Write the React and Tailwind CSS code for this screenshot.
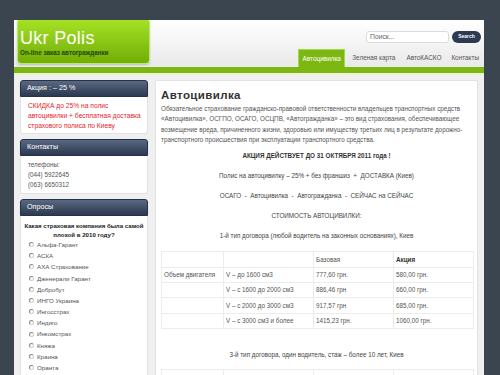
import React from "react";

const F = "font-['Liberation_Sans',Arial,sans-serif]";

function BoxHeader({ children }) {
  return (
    <div className="h-[17px] rounded-t-[3px] bg-gradient-to-b from-[#5a6982] to-[#2c394f] border border-[#26324a] flex items-center pl-[6px] text-white text-[7.2px] shadow-[0_1px_1px_rgba(0,0,0,0.3)]">
      {children}
    </div>
  );
}

const insurers = [
  "Альфа-Гарант",
  "АСКА",
  "АХА Страхование",
  "Дженерали Гарант",
  "Добробут",
  "ИНГО Украина",
  "Ингосстрах",
  "Индиго",
  "Инкомстрах",
  "Княжа",
  "Краина",
  "Оранта",
];

const rows = [
  ["Объем двигателя", "V – до 1600 см3", "777,60 грн.", "580,00 грн."],
  ["", "V – с 1600 до 2000 см3", "886,46 грн", "660,00 грн."],
  ["", "V – с 2000 до 3000 см3", "917,57 грн", "685,00 грн."],
  ["", "V – с 3000 см3 и более", "1415,23 грн.", "1060,00 грн."],
];

function PriceTable({ data, headOnly }) {
  return (
    <table className="ml-[5px] w-[312px] border-collapse text-[6.3px] text-[#555] table-fixed">
      <colgroup>
        <col className="w-[62px]" />
        <col className="w-[90px]" />
        <col className="w-[80px]" />
        <col className="w-[80px]" />
      </colgroup>
      <tbody>
        <tr className="h-[15.4px]">
          <td className="border border-[#ececec] px-[2px]"></td>
          <td className="border border-[#ececec] px-[2px]"></td>
          <td className="border border-[#ececec] px-[2px]">Базовая</td>
          <td className="border border-[#ececec] px-[2px] font-bold text-[#333]">Акция</td>
        </tr>
        {!headOnly &&
          data.map((r, i) => (
            <tr key={i} className="h-[15.4px]">
              {r.map((c, j) => (
                <td key={j} className="border border-[#ececec] px-[2px] whitespace-nowrap">
                  {c}
                </td>
              ))}
            </tr>
          ))}
      </tbody>
    </table>
  );
}

export default function App() {
  return (
    <div className={`min-h-screen h-[375px] overflow-hidden bg-[#3a4550] pt-[20px] ${F}`}>
      <div className="ml-[14px] w-[470px] bg-[#f0f0f0] h-[355px] overflow-hidden">
        {/* header */}
        <div className="h-[47px] flex bg-gradient-to-b from-white to-[#e9e9e9]">
          <div className="ml-[3px] -mt-[2px] w-[133px] h-[46px] rounded-[4px] bg-gradient-to-b from-[#a6e324] to-[#72ad06] border border-[#b9e86a] pl-[2px] shadow-[0_1px_2px_rgba(0,0,0,0.2)]">
            <div className="pt-[10px] text-[18px] leading-[18px] text-white tracking-[0.3px]">Ukr Polis</div>
            <div className="mt-[2px] text-[6.3px] font-bold text-[#24420a] leading-[8px] whitespace-nowrap">
              On-line заказ автогражданки
            </div>
          </div>
          <div className="ml-auto flex flex-col items-end pr-[3px]">
            <div className="mt-[11px] flex gap-[3px]">
              <div className="w-[83px] h-[12px] bg-white border border-[#dcdcdc] rounded-[3px] flex items-center pl-[3px] text-[6.8px] text-[#666]">
                Поиск...
              </div>
              <div className="w-[29px] h-[12px] rounded-full bg-[#2d3a52] text-white text-[5px] font-bold flex items-center justify-center">
                Search
              </div>
            </div>
            <div className="mt-auto flex items-end text-[6.4px] text-[#555] pr-[2px]">
              <div className="h-[18px] w-[47px] bg-[#7cb712] border-t border-x border-[#a3d84a] text-white flex items-center justify-center">
                Автоцивилка
              </div>
              <div className="h-[18px] flex items-center ml-[7px]">Зеленая карта</div>
              <div className="h-[18px] flex items-center ml-[11px]">АвтоКАСКО</div>
              <div className="h-[18px] flex items-center ml-[10px]">Контакты</div>
            </div>
          </div>
        </div>
        <div className="h-[6px] bg-[#7cb712]" />
        <div className="h-[2px] bg-[#eaf4d4]" />

        {/* body */}
        <div className="flex pl-[6px] pt-[5px] gap-[7px]">
          {/* sidebar */}
          <div className="w-[128px] flex flex-col gap-[5px]">
            <div>
              <BoxHeader>Акция : – 25 %</BoxHeader>
              <div className="bg-white border-x border-b border-[#e2e2e2] rounded-b-[3px] pl-[7px] pt-[4px] pb-[2px] text-[6.7px] leading-[10px] text-[#e3262c]">
                <div className="whitespace-nowrap">СКИДКА до 25% на полис</div>
                <div className="whitespace-nowrap">автоцивилки + бесплатная доставка</div>
                <div className="whitespace-nowrap">страхового полиса по Киеву</div>
              </div>
            </div>
            <div>
              <BoxHeader>Контакты</BoxHeader>
              <div className="bg-white border-x border-b border-[#e2e2e2] rounded-b-[3px] pl-[7px] pt-[4px] pb-[3px] text-[6.3px] leading-[10px] text-[#555]">
                <div>телефоны:</div>
                <div>(044) 5922645</div>
                <div>(063) 6650312</div>
              </div>
            </div>
            <div>
              <BoxHeader>Опросы</BoxHeader>
              <div className="bg-white border-x border-[#e2e2e2] pt-[4.5px] h-[200px]">
                <div className="text-center font-bold text-[6.1px] leading-[9.5px] text-[#222] whitespace-nowrap">
                  <div>Какая страховая компания была самой</div>
                  <div>плохой в 2010 году?</div>
                </div>
                <div className="mt-[-0.5px]">
                  {insurers.map((n) => (
                    <div key={n} className="h-[11.2px] flex items-center pl-[8px] text-[6.2px] text-[#555]">
                      <span className="w-[5px] h-[5px] rounded-full border border-[#8a8a8a] border-r-[#cfcfcf] border-b-[#cfcfcf] bg-white mr-[3px]" />
                      {n}
                    </div>
                  ))}
                </div>
              </div>
            </div>
          </div>

          {/* main */}
          <div className="w-[323px] h-[300px] bg-white border border-[#e2e2e2] rounded-[2px]">
            <div className="pt-[6px] pl-[5px] text-[11.5px] leading-[16px] font-bold text-[#333] tracking-[0.4px]">
              Автоцивилка
            </div>
            <div className="pl-[5px] mt-[1px] text-[6.3px] leading-[10.3px] text-[#555]">
              <div className="whitespace-nowrap">Обязательное страхование гражданско-правовой ответственности владельцев транспортных средств</div>
              <div className="whitespace-nowrap">«Автоцивилка», ОСГПО, ОСАГО, ОСЦПВ, «Автогражданка» – это вид страхования, обеспечивающее</div>
              <div className="whitespace-nowrap">возмещение вреда, причиненного жизни, здоровью или имуществу третьих лиц в результате дорожно-</div>
              <div className="whitespace-nowrap">транспортного происшествия при эксплуатации транспортного средства.</div>
            </div>
            <div className="text-center text-[6.3px] leading-[10px] text-[#444]">
              <div className="mt-[6px] font-bold text-[#333]">АКЦИЯ ДЕЙСТВУЕТ ДО 31 ОКТЯБРЯ 2011 года !</div>
              <div className="mt-[10px]">Полис на автоцивилку – 25% + без франшиз &nbsp;+&nbsp; ДОСТАВКА (Киев)</div>
              <div className="mt-[10px]">ОСАГО &nbsp;- &nbsp;Автоцивилка &nbsp;- &nbsp;Автогражданка &nbsp;- &nbsp;СЕЙЧАС на СЕЙЧАС</div>
              <div className="mt-[10px]">СТОИМОСТЬ АВТОЦИВИЛКИ:</div>
              <div className="mt-[10px]">1-й тип договора (любой водитель на законных основаниях), Киев</div>
            </div>
            <div className="mt-[10px]">
              <PriceTable data={rows} />
            </div>
            <div className="mt-[21px] text-center text-[6.3px] leading-[10px] text-[#444]">
              3-й тип договора, один водитель, стаж – более 10 лет, Киев
            </div>
            <div className="mt-[9px]">
              <PriceTable data={rows} headOnly />
            </div>
          </div>
        </div>
      </div>
    </div>
  );
}
